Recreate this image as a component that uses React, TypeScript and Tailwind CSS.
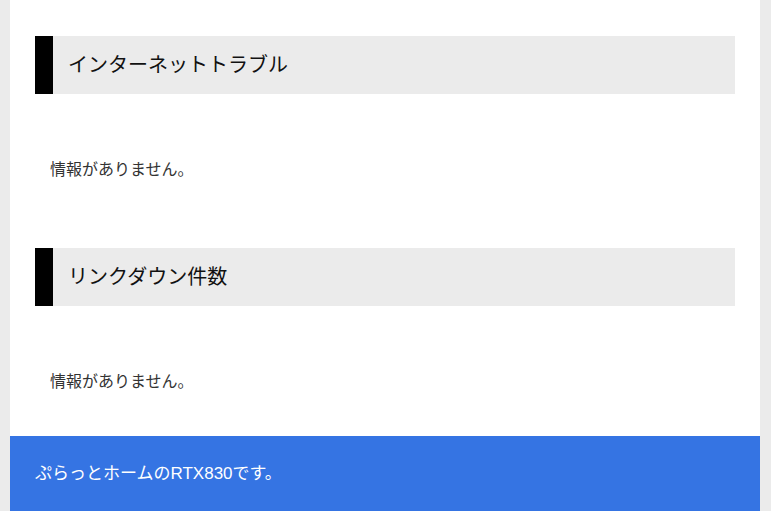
const font = { fontFamily: '"Liberation Sans", "Noto Sans CJK JP", sans-serif' }

function Section({ title }: { title: string }) {
  return (
    <div>
      <h2 className="flex h-[58px] items-center border-l-[18px] border-black bg-[#ebebeb] pl-[15px] text-[20px] text-[#111]">
        {title}
      </h2>
      <p className="mt-[64px] pl-[15px] text-[16px] leading-[24px] text-[#333]">情報がありません。</p>
    </div>
  )
}

export default function App() {
  return (
    <div className="h-[511px] overflow-hidden bg-[#ebebeb] px-[10px]" style={font}>
      <div className="w-[750px] bg-white">
        <div className="flex flex-col gap-[66px] px-[25px] pt-[36px] pb-[42px]">
          <Section title="インターネットトラブル" />
          <Section title="リンクダウン件数" />
        </div>
        <footer className="flex h-[75px] items-center bg-[#3574e3] px-[25px] text-[17px] text-white">
          ぷらっとホームのRTX830です。
        </footer>
      </div>
    </div>
  )
}
